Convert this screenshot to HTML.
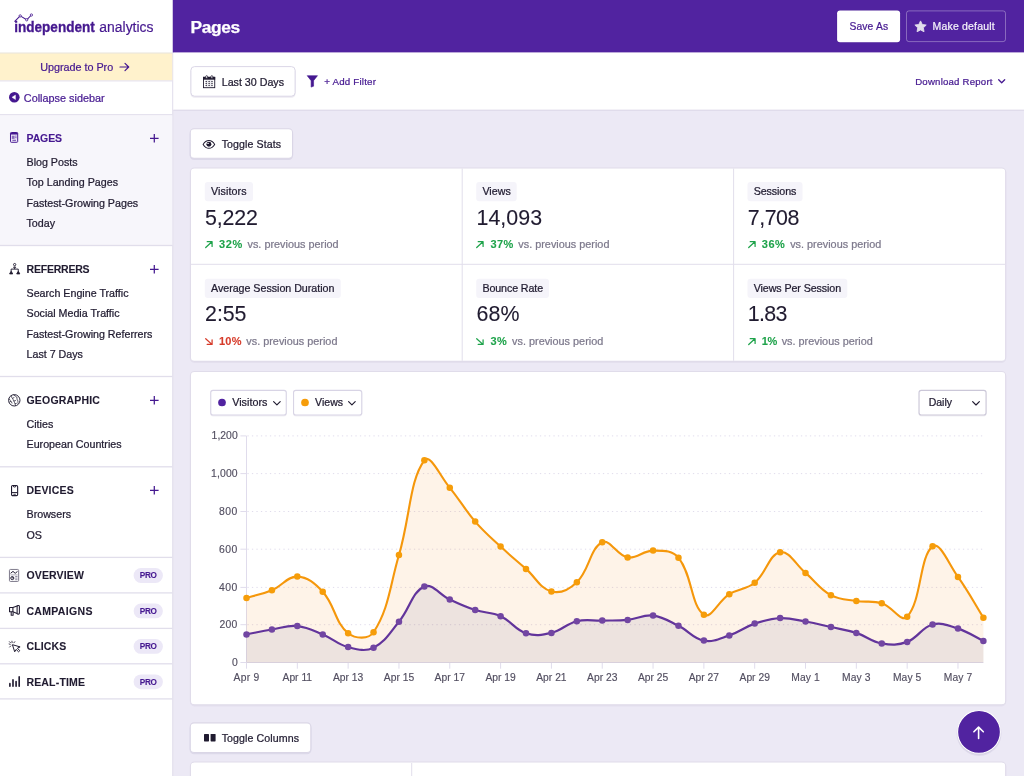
<!DOCTYPE html>
<html lang="en"><head><meta charset="utf-8"><title>Pages - Independent Analytics</title>
<style>
*{box-sizing:border-box;margin:0;padding:0}
html,body{width:1024px;height:776px;overflow:hidden}
body{background:#ECE9F5;font-family:"Liberation Sans",sans-serif;color:#201B30;position:relative}
.t{position:absolute;white-space:nowrap;-webkit-text-stroke:.24px currentColor;margin:0}
svg{position:absolute;overflow:visible}
</style></head><body>
<svg style="left:0;top:0" width="1024" height="776" viewBox="0 0 1024 776">
<rect x="0.00" y="0.00" width="172.30" height="776.00" rx="0" fill="#fff" />
<rect x="172.25" y="52.60" width="1.1" height="723.40" fill="#E2DFEC"/>
<rect x="172.80" y="0.00" width="851.20" height="52.60" rx="0" fill="#5123A0" />
<rect x="173.30" y="52.60" width="850.70" height="57.40" rx="0" fill="#fff" />
<rect x="173.30" y="109.65" width="850.70" height="1.1" fill="#DCD8E8"/>
<rect x="0.00" y="53.10" width="172.30" height="27.40" rx="0" fill="#FFF2CC" />
<rect x="0.00" y="52.50" width="172.30" height="1" fill="#E8E3DA"/>
<rect x="0.00" y="80.35" width="172.30" height="1.1" fill="#E4E0EE"/>
<rect x="0.00" y="114.15" width="172.30" height="1.3" fill="#E1DEEB"/>
<rect x="0.00" y="115.40" width="172.30" height="129.50" rx="0" fill="#F7F6FB" />
<rect x="0.00" y="244.85" width="172.30" height="1.3" fill="#E1DEEB"/>
<rect x="0.00" y="375.85" width="172.30" height="1.3" fill="#E1DEEB"/>
<rect x="0.00" y="466.15" width="172.30" height="1.3" fill="#E1DEEB"/>
<rect x="0.00" y="556.75" width="172.30" height="1.3" fill="#E1DEEB"/>
<rect x="0.00" y="592.25" width="172.30" height="1.3" fill="#E1DEEB"/>
<rect x="0.00" y="627.75" width="172.30" height="1.3" fill="#E1DEEB"/>
<rect x="0.00" y="663.15" width="172.30" height="1.3" fill="#E1DEEB"/>
<rect x="0.00" y="698.25" width="172.30" height="1.3" fill="#E1DEEB"/>
<rect x="133.60" y="568.10" width="29.30" height="14.80" rx="7.4" fill="#ECE8F7" />
<rect x="133.60" y="603.55" width="29.30" height="14.80" rx="7.4" fill="#ECE8F7" />
<rect x="133.60" y="639.00" width="29.30" height="14.80" rx="7.4" fill="#ECE8F7" />
<rect x="133.60" y="674.45" width="29.30" height="14.80" rx="7.4" fill="#ECE8F7" />
<rect x="836.60" y="9.90" width="64.00" height="32.80" rx="3.4" fill="#4A1E96" />
<rect x="837.10" y="10.40" width="63.00" height="31.80" rx="2.9" fill="#fff" />
<rect x="906.50" y="10.90" width="99.00" height="30.70" rx="2.40" fill="none" stroke="rgba(255,255,255,.32)" stroke-width="1" />
<rect x="190.40" y="67.20" width="105.20" height="30.60" rx="4.2" fill="rgba(70,50,120,.10)" />
<rect x="190.90" y="66.60" width="104.20" height="29.60" rx="3.70" fill="#fff" stroke="#DBD7E7" stroke-width="1" />
<rect x="189.70" y="129.40" width="103.40" height="30.60" rx="4.4" fill="rgba(70,50,120,.09)" />
<rect x="190.25" y="128.75" width="102.30" height="29.50" rx="3.85" fill="#fff" stroke="#DAD6E6" stroke-width="1.1" />
<rect x="189.90" y="168.40" width="816.30" height="194.50" rx="4.4" fill="rgba(70,50,120,.05)" />
<rect x="190.45" y="167.95" width="815.20" height="193.40" rx="3.85" fill="#fff" stroke="#E0DCEA" stroke-width="1.1" />
<rect x="191.00" y="263.80" width="814.10" height="1" fill="#E1DEEB"/>
<rect x="461.70" y="168.50" width="1" height="192.30" fill="#E1DEEB"/>
<rect x="733.10" y="168.50" width="1" height="192.30" fill="#E1DEEB"/>
<rect x="204.80" y="182.10" width="48.20" height="19.20" rx="3" fill="#F5F4FA" />
<rect x="476.20" y="182.10" width="40.50" height="19.20" rx="3" fill="#F5F4FA" />
<rect x="747.50" y="182.10" width="55.00" height="19.20" rx="3" fill="#F5F4FA" />
<rect x="204.80" y="278.70" width="136.00" height="19.20" rx="3" fill="#F5F4FA" />
<rect x="476.20" y="278.70" width="72.80" height="19.20" rx="3" fill="#F5F4FA" />
<rect x="747.50" y="278.70" width="99.80" height="19.20" rx="3" fill="#F5F4FA" />
<rect x="189.90" y="372.00" width="816.30" height="334.40" rx="4.4" fill="rgba(70,50,120,.05)" />
<rect x="190.45" y="371.55" width="815.20" height="333.30" rx="3.85" fill="#fff" stroke="#E0DCEA" stroke-width="1.1" />
<rect x="210.20" y="390.80" width="76.60" height="25.70" rx="3" fill="rgba(70,50,120,.07)" />
<rect x="210.75" y="390.35" width="75.50" height="24.60" rx="2.25" fill="#fff" stroke="#D8D4E5" stroke-width="1.1" />
<circle cx="222.0" cy="402.5" r="3.85" fill="#5123A0"/>
<rect x="293.00" y="390.80" width="69.30" height="25.70" rx="3" fill="rgba(70,50,120,.07)" />
<rect x="293.55" y="390.35" width="68.20" height="24.60" rx="2.25" fill="#fff" stroke="#D8D4E5" stroke-width="1.1" />
<circle cx="305.0" cy="402.5" r="3.85" fill="#F69D0A"/>
<rect x="918.50" y="390.80" width="68.10" height="25.70" rx="3" fill="rgba(70,50,120,.07)" />
<rect x="919.05" y="390.35" width="67.00" height="24.60" rx="2.25" fill="#fff" stroke="#CBC7D8" stroke-width="1.1" />
<path d="M240.4 662.50H246.5" stroke="#E0DCEC" stroke-width="1" fill="none"/>
<path d="M247.4 624.70H983" stroke="#E0DCEC" stroke-width="1" stroke-dasharray="1.3 3.2" fill="none"/>
<path d="M240.4 624.70H246.5" stroke="#E0DCEC" stroke-width="1" fill="none"/>
<path d="M247.4 587.40H983" stroke="#E0DCEC" stroke-width="1" stroke-dasharray="1.3 3.2" fill="none"/>
<path d="M240.4 587.40H246.5" stroke="#E0DCEC" stroke-width="1" fill="none"/>
<path d="M247.4 549.20H983" stroke="#E0DCEC" stroke-width="1" stroke-dasharray="1.3 3.2" fill="none"/>
<path d="M240.4 549.20H246.5" stroke="#E0DCEC" stroke-width="1" fill="none"/>
<path d="M247.4 511.50H983" stroke="#E0DCEC" stroke-width="1" stroke-dasharray="1.3 3.2" fill="none"/>
<path d="M240.4 511.50H246.5" stroke="#E0DCEC" stroke-width="1" fill="none"/>
<path d="M247.4 473.60H983" stroke="#E0DCEC" stroke-width="1" stroke-dasharray="1.3 3.2" fill="none"/>
<path d="M240.4 473.60H246.5" stroke="#E0DCEC" stroke-width="1" fill="none"/>
<path d="M247.4 435.90H983" stroke="#E0DCEC" stroke-width="1" stroke-dasharray="1.3 3.2" fill="none"/>
<path d="M240.4 435.90H246.5" stroke="#E0DCEC" stroke-width="1" fill="none"/>
<path d="M246.5 435.9V662.5" stroke="#E0DCEC" stroke-width="1" fill="none"/>
<path d="M246.5 662.5H983.4" stroke="#E0DCEC" stroke-width="1" fill="none"/>
<path d="M246.50 662.5V668.7" stroke="#E0DCEC" stroke-width="1" fill="none"/>
<path d="M297.32 662.5V668.7" stroke="#E0DCEC" stroke-width="1" fill="none"/>
<path d="M348.14 662.5V668.7" stroke="#E0DCEC" stroke-width="1" fill="none"/>
<path d="M398.96 662.5V668.7" stroke="#E0DCEC" stroke-width="1" fill="none"/>
<path d="M449.78 662.5V668.7" stroke="#E0DCEC" stroke-width="1" fill="none"/>
<path d="M500.60 662.5V668.7" stroke="#E0DCEC" stroke-width="1" fill="none"/>
<path d="M551.42 662.5V668.7" stroke="#E0DCEC" stroke-width="1" fill="none"/>
<path d="M602.24 662.5V668.7" stroke="#E0DCEC" stroke-width="1" fill="none"/>
<path d="M653.06 662.5V668.7" stroke="#E0DCEC" stroke-width="1" fill="none"/>
<path d="M703.88 662.5V668.7" stroke="#E0DCEC" stroke-width="1" fill="none"/>
<path d="M754.70 662.5V668.7" stroke="#E0DCEC" stroke-width="1" fill="none"/>
<path d="M805.52 662.5V668.7" stroke="#E0DCEC" stroke-width="1" fill="none"/>
<path d="M856.34 662.5V668.7" stroke="#E0DCEC" stroke-width="1" fill="none"/>
<path d="M907.16 662.5V668.7" stroke="#E0DCEC" stroke-width="1" fill="none"/>
<path d="M957.98 662.5V668.7" stroke="#E0DCEC" stroke-width="1" fill="none"/>
<path d="M246.50,597.90C256.66,594.82 262.16,594.29 271.91,590.20C282.49,585.77 287.29,576.28 297.32,576.60C307.62,576.92 315.03,583.23 322.73,591.80C335.36,605.87 334.80,622.57 348.14,633.20C355.12,638.77 368.71,639.75 373.55,632.30C389.04,608.47 389.74,586.20 398.96,555.00C410.07,517.40 409.66,479.75 424.37,460.30C429.99,452.87 440.23,476.28 449.78,487.80C460.56,500.80 464.16,508.84 475.19,521.60C484.49,532.36 490.17,536.89 500.60,546.60C510.49,555.81 515.88,559.95 526.01,568.90C536.20,577.91 540.10,588.54 551.42,591.50C560.43,593.86 569.43,589.36 576.83,582.20C589.76,569.68 589.73,548.41 602.24,542.30C610.06,538.49 616.89,555.64 627.65,557.40C637.22,558.96 642.91,550.54 653.06,550.60C663.24,550.66 672.43,550.08 678.47,557.70C692.76,575.72 690.53,605.11 703.88,614.70C710.86,619.71 718.32,601.09 729.29,594.20C738.65,588.33 746.33,589.72 754.70,582.80C766.66,572.92 768.97,554.37 780.11,552.20C789.29,550.41 795.51,564.43 805.52,572.90C815.84,581.63 819.45,588.85 830.93,595.20C839.78,600.09 846.07,599.38 856.34,601.00C866.39,602.58 872.21,600.23 881.75,603.20C892.53,606.55 901.51,623.12 907.16,616.80C921.84,600.36 919.29,556.73 932.57,546.30C939.62,540.77 948.78,563.97 957.98,576.90C969.10,592.53 973.23,601.38 983.39,617.70L983.39,662.5L246.50,662.5Z" fill="rgba(246,140,30,.1)"/>
<path d="M246.50,597.90C256.66,594.82 262.16,594.29 271.91,590.20C282.49,585.77 287.29,576.28 297.32,576.60C307.62,576.92 315.03,583.23 322.73,591.80C335.36,605.87 334.80,622.57 348.14,633.20C355.12,638.77 368.71,639.75 373.55,632.30C389.04,608.47 389.74,586.20 398.96,555.00C410.07,517.40 409.66,479.75 424.37,460.30C429.99,452.87 440.23,476.28 449.78,487.80C460.56,500.80 464.16,508.84 475.19,521.60C484.49,532.36 490.17,536.89 500.60,546.60C510.49,555.81 515.88,559.95 526.01,568.90C536.20,577.91 540.10,588.54 551.42,591.50C560.43,593.86 569.43,589.36 576.83,582.20C589.76,569.68 589.73,548.41 602.24,542.30C610.06,538.49 616.89,555.64 627.65,557.40C637.22,558.96 642.91,550.54 653.06,550.60C663.24,550.66 672.43,550.08 678.47,557.70C692.76,575.72 690.53,605.11 703.88,614.70C710.86,619.71 718.32,601.09 729.29,594.20C738.65,588.33 746.33,589.72 754.70,582.80C766.66,572.92 768.97,554.37 780.11,552.20C789.29,550.41 795.51,564.43 805.52,572.90C815.84,581.63 819.45,588.85 830.93,595.20C839.78,600.09 846.07,599.38 856.34,601.00C866.39,602.58 872.21,600.23 881.75,603.20C892.53,606.55 901.51,623.12 907.16,616.80C921.84,600.36 919.29,556.73 932.57,546.30C939.62,540.77 948.78,563.97 957.98,576.90C969.10,592.53 973.23,601.38 983.39,617.70" fill="none" stroke="#F5970B" stroke-width="2.1" stroke-linejoin="round"/>
<circle cx="246.50" cy="597.90" r="3.25" fill="#F69D0A"/>
<circle cx="271.91" cy="590.20" r="3.25" fill="#F69D0A"/>
<circle cx="297.32" cy="576.60" r="3.25" fill="#F69D0A"/>
<circle cx="322.73" cy="591.80" r="3.25" fill="#F69D0A"/>
<circle cx="348.14" cy="633.20" r="3.25" fill="#F69D0A"/>
<circle cx="373.55" cy="632.30" r="3.25" fill="#F69D0A"/>
<circle cx="398.96" cy="555.00" r="3.25" fill="#F69D0A"/>
<circle cx="424.37" cy="460.30" r="3.25" fill="#F69D0A"/>
<circle cx="449.78" cy="487.80" r="3.25" fill="#F69D0A"/>
<circle cx="475.19" cy="521.60" r="3.25" fill="#F69D0A"/>
<circle cx="500.60" cy="546.60" r="3.25" fill="#F69D0A"/>
<circle cx="526.01" cy="568.90" r="3.25" fill="#F69D0A"/>
<circle cx="551.42" cy="591.50" r="3.25" fill="#F69D0A"/>
<circle cx="576.83" cy="582.20" r="3.25" fill="#F69D0A"/>
<circle cx="602.24" cy="542.30" r="3.25" fill="#F69D0A"/>
<circle cx="627.65" cy="557.40" r="3.25" fill="#F69D0A"/>
<circle cx="653.06" cy="550.60" r="3.25" fill="#F69D0A"/>
<circle cx="678.47" cy="557.70" r="3.25" fill="#F69D0A"/>
<circle cx="703.88" cy="614.70" r="3.25" fill="#F69D0A"/>
<circle cx="729.29" cy="594.20" r="3.25" fill="#F69D0A"/>
<circle cx="754.70" cy="582.80" r="3.25" fill="#F69D0A"/>
<circle cx="780.11" cy="552.20" r="3.25" fill="#F69D0A"/>
<circle cx="805.52" cy="572.90" r="3.25" fill="#F69D0A"/>
<circle cx="830.93" cy="595.20" r="3.25" fill="#F69D0A"/>
<circle cx="856.34" cy="601.00" r="3.25" fill="#F69D0A"/>
<circle cx="881.75" cy="603.20" r="3.25" fill="#F69D0A"/>
<circle cx="907.16" cy="616.80" r="3.25" fill="#F69D0A"/>
<circle cx="932.57" cy="546.30" r="3.25" fill="#F69D0A"/>
<circle cx="957.98" cy="576.90" r="3.25" fill="#F69D0A"/>
<circle cx="983.39" cy="617.70" r="3.25" fill="#F69D0A"/>
<path d="M246.50,634.40C256.66,632.44 261.70,631.17 271.91,629.50C282.03,627.85 287.37,625.14 297.32,626.10C307.70,627.10 312.87,630.33 322.73,634.40C333.20,638.73 337.41,644.29 348.14,647.10C357.74,649.61 365.18,651.87 373.55,647.70C385.50,641.75 389.71,632.93 398.96,621.80C410.04,608.45 412.10,591.89 424.37,586.50C432.42,582.97 439.43,594.71 449.78,599.50C459.75,604.11 464.77,606.58 475.19,610.00C485.10,613.26 491.23,611.92 500.60,616.20C511.56,621.20 514.91,629.55 526.01,633.20C535.24,636.23 541.74,635.18 551.42,632.90C562.07,630.38 566.18,623.78 576.83,621.20C586.51,618.86 592.08,620.86 602.24,620.60C612.40,620.34 617.56,620.89 627.65,619.90C637.88,618.89 643.20,614.46 653.06,615.60C663.53,616.82 668.67,620.98 678.47,625.80C689.00,630.98 693.08,638.56 703.88,640.60C713.41,642.40 719.52,638.67 729.29,635.40C739.85,631.87 744.16,627.19 754.70,623.60C764.48,620.27 769.87,618.52 780.11,618.10C790.20,617.68 795.43,619.73 805.52,621.50C815.76,623.29 820.78,624.72 830.93,627.00C841.11,629.28 846.44,629.71 856.34,632.90C866.77,636.27 871.19,641.53 881.75,643.40C891.52,645.13 897.96,645.32 907.16,641.90C918.29,637.76 921.50,627.40 932.57,624.50C941.82,622.08 948.29,625.47 957.98,628.60C968.61,632.03 973.23,635.98 983.39,640.90L983.39,662.5L246.50,662.5Z" fill="rgba(93,88,147,.1)"/>
<path d="M246.50,634.40C256.66,632.44 261.70,631.17 271.91,629.50C282.03,627.85 287.37,625.14 297.32,626.10C307.70,627.10 312.87,630.33 322.73,634.40C333.20,638.73 337.41,644.29 348.14,647.10C357.74,649.61 365.18,651.87 373.55,647.70C385.50,641.75 389.71,632.93 398.96,621.80C410.04,608.45 412.10,591.89 424.37,586.50C432.42,582.97 439.43,594.71 449.78,599.50C459.75,604.11 464.77,606.58 475.19,610.00C485.10,613.26 491.23,611.92 500.60,616.20C511.56,621.20 514.91,629.55 526.01,633.20C535.24,636.23 541.74,635.18 551.42,632.90C562.07,630.38 566.18,623.78 576.83,621.20C586.51,618.86 592.08,620.86 602.24,620.60C612.40,620.34 617.56,620.89 627.65,619.90C637.88,618.89 643.20,614.46 653.06,615.60C663.53,616.82 668.67,620.98 678.47,625.80C689.00,630.98 693.08,638.56 703.88,640.60C713.41,642.40 719.52,638.67 729.29,635.40C739.85,631.87 744.16,627.19 754.70,623.60C764.48,620.27 769.87,618.52 780.11,618.10C790.20,617.68 795.43,619.73 805.52,621.50C815.76,623.29 820.78,624.72 830.93,627.00C841.11,629.28 846.44,629.71 856.34,632.90C866.77,636.27 871.19,641.53 881.75,643.40C891.52,645.13 897.96,645.32 907.16,641.90C918.29,637.76 921.50,627.40 932.57,624.50C941.82,622.08 948.29,625.47 957.98,628.60C968.61,632.03 973.23,635.98 983.39,640.90" fill="none" stroke="#62349B" stroke-width="2.2" stroke-linejoin="round"/>
<circle cx="246.50" cy="634.40" r="3.25" fill="#7246A2"/>
<circle cx="271.91" cy="629.50" r="3.25" fill="#7246A2"/>
<circle cx="297.32" cy="626.10" r="3.25" fill="#7246A2"/>
<circle cx="322.73" cy="634.40" r="3.25" fill="#7246A2"/>
<circle cx="348.14" cy="647.10" r="3.25" fill="#7246A2"/>
<circle cx="373.55" cy="647.70" r="3.25" fill="#7246A2"/>
<circle cx="398.96" cy="621.80" r="3.25" fill="#7246A2"/>
<circle cx="424.37" cy="586.50" r="3.25" fill="#7246A2"/>
<circle cx="449.78" cy="599.50" r="3.25" fill="#7246A2"/>
<circle cx="475.19" cy="610.00" r="3.25" fill="#7246A2"/>
<circle cx="500.60" cy="616.20" r="3.25" fill="#7246A2"/>
<circle cx="526.01" cy="633.20" r="3.25" fill="#7246A2"/>
<circle cx="551.42" cy="632.90" r="3.25" fill="#7246A2"/>
<circle cx="576.83" cy="621.20" r="3.25" fill="#7246A2"/>
<circle cx="602.24" cy="620.60" r="3.25" fill="#7246A2"/>
<circle cx="627.65" cy="619.90" r="3.25" fill="#7246A2"/>
<circle cx="653.06" cy="615.60" r="3.25" fill="#7246A2"/>
<circle cx="678.47" cy="625.80" r="3.25" fill="#7246A2"/>
<circle cx="703.88" cy="640.60" r="3.25" fill="#7246A2"/>
<circle cx="729.29" cy="635.40" r="3.25" fill="#7246A2"/>
<circle cx="754.70" cy="623.60" r="3.25" fill="#7246A2"/>
<circle cx="780.11" cy="618.10" r="3.25" fill="#7246A2"/>
<circle cx="805.52" cy="621.50" r="3.25" fill="#7246A2"/>
<circle cx="830.93" cy="627.00" r="3.25" fill="#7246A2"/>
<circle cx="856.34" cy="632.90" r="3.25" fill="#7246A2"/>
<circle cx="881.75" cy="643.40" r="3.25" fill="#7246A2"/>
<circle cx="907.16" cy="641.90" r="3.25" fill="#7246A2"/>
<circle cx="932.57" cy="624.50" r="3.25" fill="#7246A2"/>
<circle cx="957.98" cy="628.60" r="3.25" fill="#7246A2"/>
<circle cx="983.39" cy="640.90" r="3.25" fill="#7246A2"/>
<rect x="189.70" y="723.50" width="121.70" height="30.80" rx="4.4" fill="rgba(70,50,120,.09)" />
<rect x="190.25" y="722.85" width="120.60" height="29.70" rx="3.85" fill="#fff" stroke="#DAD6E6" stroke-width="1.1" />
<rect x="189.90" y="762.40" width="816.30" height="39.70" rx="4.4" fill="rgba(70,50,120,.05)" />
<rect x="190.45" y="761.95" width="815.20" height="38.60" rx="3.85" fill="#fff" stroke="#E0DCEA" stroke-width="1.1" />
<rect x="411.20" y="763.00" width="1" height="13.00" fill="#E1DEEB"/>
<circle cx="979" cy="733.4" r="22.5" fill="rgba(60,40,110,.07)"/>
<circle cx="979" cy="732.6" r="22" fill="rgba(60,40,110,.07)"/>
<circle cx="979" cy="731.9" r="21.4" fill="#5123A0" stroke="#fff" stroke-width="1.1"/>
</svg>
<div id="fg" style="position:absolute;left:0;top:0;width:1024px;height:776px;will-change:transform">
<svg class="i" style="left:0;top:0" width="172" height="52" viewBox="0 0 172 52"><text x="14.2" y="31.6" font-family="Liberation Sans, sans-serif" font-weight="700" font-size="15.5" fill="#45188F" stroke="#45188F" stroke-width=".35" textLength="80.6" lengthAdjust="spacingAndGlyphs">independent</text><text x="99.3" y="31.6" font-family="Liberation Sans, sans-serif" font-weight="400" font-size="15.5" fill="#45188F" stroke="#45188F" stroke-width=".2" textLength="54.2" lengthAdjust="spacingAndGlyphs">analytics</text><path d="M14.5 21.6 L20.2 15.9 L26.7 19.8 L31.4 15" fill="none" stroke="#45188F" stroke-width="1.05" stroke-linejoin="round"/><circle cx="20.2" cy="15.9" r="1.15" fill="#fff" stroke="#45188F" stroke-width="0.8"/><circle cx="26.7" cy="19.8" r="1.15" fill="#fff" stroke="#45188F" stroke-width="0.8"/><circle cx="31.4" cy="15" r="1.15" fill="#fff" stroke="#45188F" stroke-width="0.8"/></svg>
<div class="t" style="left:40.20px;top:59.96px;font-size:10.8px;line-height:14px;color:#451890;font-weight:400;-webkit-text-stroke:.22px;letter-spacing:-0.017px;">Upgrade to Pro</div>
<svg class="i" style="left:119.00px;top:62.00px" width="11" height="10" viewBox="0 0 11 10"><path d="M1 5H9.6M6 1.3L9.7 5L6 8.7" fill="none" stroke="#451890" stroke-width="1.2" stroke-linecap="round" stroke-linejoin="round"/></svg>
<svg class="i" style="left:9.00px;top:92.40px" width="10.6" height="10.6" viewBox="0 0 20 20"><circle cx="10" cy="10" r="10" fill="#451890"/><path d="M12.2 5.8V14.2L5.6 10Z" fill="#fff" stroke="#fff" stroke-width=".8" stroke-linejoin="round"/></svg>
<div class="t" style="left:23.80px;top:90.84px;font-size:10.85px;line-height:14px;color:#451890;font-weight:400;-webkit-text-stroke:.22px;letter-spacing:0.005px;">Collapse sidebar</div>
<div class="t" style="left:26.50px;top:130.76px;font-size:10.5px;line-height:14px;color:#451890;font-weight:700;-webkit-text-stroke:.1px;letter-spacing:-0.096px;">PAGES</div>
<svg class="i" style="left:150.00px;top:133.90px" width="8.6" height="8.6" viewBox="0 0 8.6 8.6"><path d="M4.3 0V8.6M0 4.3H8.6" stroke="#451890" stroke-width="1.25" fill="none"/></svg>
<div class="t" style="left:26.50px;top:155.09px;font-size:10.7px;line-height:14px;color:#201B30;font-weight:400;">Blog Posts</div>
<div class="t" style="left:26.50px;top:175.34px;font-size:10.7px;line-height:14px;color:#201B30;font-weight:400;">Top Landing Pages</div>
<div class="t" style="left:26.50px;top:195.59px;font-size:10.7px;line-height:14px;color:#201B30;font-weight:400;">Fastest-Growing Pages</div>
<div class="t" style="left:26.50px;top:215.84px;font-size:10.7px;line-height:14px;color:#201B30;font-weight:400;">Today</div>
<div class="t" style="left:26.50px;top:261.76px;font-size:10.5px;line-height:14px;color:#201B30;font-weight:700;-webkit-text-stroke:.1px;letter-spacing:-0.207px;">REFERRERS</div>
<svg class="i" style="left:150.00px;top:264.90px" width="8.6" height="8.6" viewBox="0 0 8.6 8.6"><path d="M4.3 0V8.6M0 4.3H8.6" stroke="#451890" stroke-width="1.25" fill="none"/></svg>
<div class="t" style="left:26.50px;top:286.09px;font-size:10.7px;line-height:14px;color:#201B30;font-weight:400;">Search Engine Traffic</div>
<div class="t" style="left:26.50px;top:306.34px;font-size:10.7px;line-height:14px;color:#201B30;font-weight:400;">Social Media Traffic</div>
<div class="t" style="left:26.50px;top:326.59px;font-size:10.7px;line-height:14px;color:#201B30;font-weight:400;">Fastest-Growing Referrers</div>
<div class="t" style="left:26.50px;top:346.84px;font-size:10.7px;line-height:14px;color:#201B30;font-weight:400;">Last 7 Days</div>
<div class="t" style="left:26.50px;top:392.76px;font-size:10.5px;line-height:14px;color:#201B30;font-weight:700;-webkit-text-stroke:.1px;letter-spacing:0.184px;">GEOGRAPHIC</div>
<svg class="i" style="left:150.00px;top:395.90px" width="8.6" height="8.6" viewBox="0 0 8.6 8.6"><path d="M4.3 0V8.6M0 4.3H8.6" stroke="#451890" stroke-width="1.25" fill="none"/></svg>
<div class="t" style="left:26.50px;top:417.09px;font-size:10.7px;line-height:14px;color:#201B30;font-weight:400;">Cities</div>
<div class="t" style="left:26.50px;top:437.34px;font-size:10.7px;line-height:14px;color:#201B30;font-weight:400;">European Countries</div>
<div class="t" style="left:26.50px;top:482.96px;font-size:10.5px;line-height:14px;color:#201B30;font-weight:700;-webkit-text-stroke:.1px;letter-spacing:0.172px;">DEVICES</div>
<svg class="i" style="left:150.00px;top:486.10px" width="8.6" height="8.6" viewBox="0 0 8.6 8.6"><path d="M4.3 0V8.6M0 4.3H8.6" stroke="#451890" stroke-width="1.25" fill="none"/></svg>
<div class="t" style="left:26.50px;top:507.29px;font-size:10.7px;line-height:14px;color:#201B30;font-weight:400;">Browsers</div>
<div class="t" style="left:26.50px;top:527.54px;font-size:10.7px;line-height:14px;color:#201B30;font-weight:400;">OS</div>
<div class="t" style="left:26.40px;top:568.26px;font-size:10.5px;line-height:14px;color:#201B30;font-weight:700;-webkit-text-stroke:.1px;letter-spacing:0.162px;">OVERVIEW</div>
<div class="t" style="left:139.80px;top:570.16px;font-size:8.2px;line-height:11px;color:#451890;font-weight:700;-webkit-text-stroke:.1px;letter-spacing:-0.290px;">PRO</div>
<div class="t" style="left:26.40px;top:603.71px;font-size:10.5px;line-height:14px;color:#201B30;font-weight:700;-webkit-text-stroke:.1px;letter-spacing:0.334px;">CAMPAIGNS</div>
<div class="t" style="left:139.80px;top:605.61px;font-size:8.2px;line-height:11px;color:#451890;font-weight:700;-webkit-text-stroke:.1px;letter-spacing:-0.290px;">PRO</div>
<div class="t" style="left:26.40px;top:639.16px;font-size:10.5px;line-height:14px;color:#201B30;font-weight:700;-webkit-text-stroke:.1px;letter-spacing:0.153px;">CLICKS</div>
<div class="t" style="left:139.80px;top:641.06px;font-size:8.2px;line-height:11px;color:#451890;font-weight:700;-webkit-text-stroke:.1px;letter-spacing:-0.290px;">PRO</div>
<div class="t" style="left:26.40px;top:674.61px;font-size:10.5px;line-height:14px;color:#201B30;font-weight:700;-webkit-text-stroke:.1px;letter-spacing:0.182px;">REAL-TIME</div>
<div class="t" style="left:139.80px;top:676.51px;font-size:8.2px;line-height:11px;color:#451890;font-weight:700;-webkit-text-stroke:.1px;letter-spacing:-0.290px;">PRO</div>
<svg class="i" style="left:10.00px;top:132.00px" width="8.2" height="10.8" viewBox="0 0 8.2 10.8"><rect x=".5" y=".5" width="7.2" height="9.8" rx=".8" fill="#EFEAF9" stroke="#451890" stroke-width="1"/><path d="M.5 1.7H7.7" stroke="#451890" stroke-width="1.7"/><rect x="1.8" y="3.7" width="2.8" height="3.2" fill="#451890" opacity=".6"/><path d="M5.3 4.1H6.5M5.3 5.7H6.5M2.4 8.3H6" stroke="#451890" stroke-width=".8"/></svg>
<svg class="i" style="left:8.60px;top:263.00px" width="11.5" height="11.5" viewBox="0 0 11.5 11.5"><circle cx="5.65" cy="1.6" r="1.15" fill="#fff" stroke="#201B30" stroke-width=".9"/><path d="M4.1 4.8C4.1 3 7.2 3 7.2 4.8Z" fill="#201B30"/><path d="M5.65 4.6V6.1M2.15 8V6.1H9.25V8" fill="none" stroke="#201B30" stroke-width=".95"/><path d="M2.15 8.1L3.7 10.9H.6Z M9.25 8.1L10.8 10.9H7.7Z" fill="#201B30" stroke="#201B30" stroke-width=".9" stroke-linejoin="round"/></svg>
<svg class="i" style="left:8.00px;top:393.60px" width="12.6" height="12.6" viewBox="0 0 12.6 12.6"><circle cx="6.3" cy="6.3" r="5.7" fill="none" stroke="#201B30" stroke-width=".95"/><path d="M3 1.7C4 2.6 3.4 3.6 4.4 4.4C5.4 5.2 5 6.2 5.8 7C6.6 7.8 6.4 9 7 9.8C7.4 10.4 7.2 11.2 7.4 11.8M5.6 .8C6.2 2 8 1.8 8.7 3C9.3 4.2 8.6 5 9.4 6C10.2 7 9.9 8.4 10 9.6M.8 4.8C2 5.2 1.8 6.4 2.8 7C3.6 7.5 3.4 8.6 4.1 9.4M4.4 4.4L6.3 3.5M5.8 7L7.9 6.5M7 9.8L8.7 9.3M2.8 7L1.4 8.6" fill="none" stroke="#201B30" stroke-width=".85" opacity=".9"/></svg>
<svg class="i" style="left:10.80px;top:484.80px" width="7.2" height="11.2" viewBox="0 0 7.2 11.2"><rect x=".55" y=".55" width="6.1" height="10.1" rx="1.2" fill="none" stroke="#201B30" stroke-width="1.1"/><path d="M2.1 .6L2.8 2H4.4L5.1 .6" fill="none" stroke="#201B30" stroke-width=".9"/><path d="M.6 7.6H6.6" stroke="#201B30" stroke-width="1"/><path d="M2.4 9.3H4.8" stroke="#201B30" stroke-width=".8"/></svg>
<svg class="i" style="left:9.00px;top:569.00px" width="10.1" height="12.9" viewBox="0 0 10.1 12.9"><rect x=".45" y=".45" width="9.2" height="12" rx="1" fill="none" stroke="#6F6B7E" stroke-width=".9"/><path d="M1.6 4.3L4 2.4L6.2 4.3L8.5 2.4" fill="none" stroke="#201B30" stroke-width="1" stroke-linejoin="round"/><path d="M1.5 5.9H8.6" stroke="#8E8A9A" stroke-width=".7"/><circle cx="3.3" cy="9.1" r="1.55" fill="none" stroke="#201B30" stroke-width=".95"/><path d="M3.3 7.6V9.1H4.8" fill="none" stroke="#201B30" stroke-width=".7"/><path d="M6.2 7.5H8.5M6.2 9.1H8.5M6.2 10.7H8.5" stroke="#77738A" stroke-width=".8"/></svg>
<svg class="i" style="left:9.00px;top:605.10px" width="11" height="11" viewBox="0 0 11 11"><path d="M.55 2.5H3.9V6.7H.55Z" fill="none" stroke="#201B30" stroke-width="1.1" stroke-linejoin="round"/><path d="M3.9 2.5L8.1 1.1M3.9 6.7L8.1 8.4" fill="none" stroke="#201B30" stroke-width="1.1"/><rect x="8.1" y=".5" width="2.3" height="8.6" rx=".9" fill="none" stroke="#201B30" stroke-width="1.05"/><path d="M2.2 6.8V10.3H4.1V7.2" fill="none" stroke="#201B30" stroke-width="1.05" stroke-linejoin="round"/></svg>
<svg class="i" style="left:8.60px;top:639.60px" width="11.8" height="12.4" viewBox="0 0 11.8 12.4"><path d="M3.4 4.7L11.1 6.9L8.4 8.2L10.8 10.7L9.6 11.8L7.1 9.4L5.7 11.8Z" fill="#fff" stroke="#201B30" stroke-width="1" stroke-linejoin="round"/><path d="M.45 1.7L1.6 2.85M2.95 1.2L3.1 2.6M5.8 1.7L4.9 2.8M.1 4L1.2 4.35M.65 7.05L1.75 5.95" stroke="#201B30" stroke-width=".85" fill="none" stroke-linecap="round"/></svg>
<svg class="i" style="left:8.80px;top:676.00px" width="11.2" height="11" viewBox="0 0 11.2 11"><path d="M.9 10.2V7.7M4 10.2V3.9M7.1 10.2V5.6M10.2 10.2V.9" stroke="#201B30" stroke-width="1.65" stroke-linecap="round" fill="none"/></svg>
<h1 class="t" style="left:190.50px;top:15.77px;font-size:17.4px;line-height:23px;color:#fff;font-weight:700;-webkit-text-stroke:.25px;letter-spacing:-0.413px;">Pages</h1>
<div class="t" style="left:849.40px;top:19.93px;font-size:10.3px;line-height:13px;color:#451890;font-weight:400;-webkit-text-stroke:.22px;letter-spacing:0.159px;">Save As</div>
<svg class="i" style="left:913.80px;top:19.90px" width="13.1" height="12.6" viewBox="0 0 24 23"><path d="M12 1.6l3.2 6.6 7.2 1-5.2 5.1 1.2 7.2-6.4-3.4-6.4 3.4 1.2-7.2L1.6 9.2l7.2-1z" fill="#E2DDEC" stroke="#E2DDEC" stroke-width="1.6" stroke-linejoin="round"/></svg>
<div class="t" style="left:932.60px;top:19.06px;font-size:10.5px;line-height:14px;color:#F4F1FA;font-weight:400;-webkit-text-stroke:.22px;letter-spacing:0.173px;">Make default</div>
<svg class="i" style="left:203.00px;top:75.00px" width="12.2" height="13.2" viewBox="0 0 12.2 13.2"><rect x=".45" y="2.3" width="11.3" height="10.4" fill="#fff" stroke="#201B30" stroke-width=".9"/><rect x="0" y="1.9" width="12.2" height="2.8" fill="#201B30"/><rect x="2.7" y=".7" width="1.9" height="2.6" rx=".9" fill="#fff" stroke="#201B30" stroke-width=".8"/><rect x="7.9" y=".7" width="1.9" height="2.6" rx=".9" fill="#fff" stroke="#201B30" stroke-width=".8"/><g fill="#201B30"><circle cx="3.2" cy="6.5" r=".7"/><circle cx="6.1" cy="6.5" r=".7"/><circle cx="9" cy="6.5" r=".7"/><circle cx="3.2" cy="8.55" r=".7"/><circle cx="6.1" cy="8.55" r=".7"/><circle cx="9" cy="8.55" r=".7"/><circle cx="3.2" cy="10.5" r=".7"/><circle cx="6.1" cy="10.5" r=".7"/><circle cx="9" cy="10.5" r=".7"/></g><path d="M4.65 5V12M7.6 5V12" stroke="#D9D7E0" stroke-width=".5"/></svg>
<div class="t" style="left:221.70px;top:74.59px;font-size:10.7px;line-height:14px;color:#201B30;font-weight:400;letter-spacing:-0.004px;">Last 30 Days</div>
<svg class="i" style="left:306.90px;top:75.30px" width="10.7" height="12.6" viewBox="0 0 11.2 12.6"><path d="M.2 .4H11L6.9 5.6V11.4L4.3 12.4V5.6Z" fill="#451890" stroke="#451890" stroke-width=".6" stroke-linejoin="round"/></svg>
<div class="t" style="left:324.30px;top:75.32px;font-size:9.75px;line-height:13px;color:#451890;font-weight:400;-webkit-text-stroke:.22px;letter-spacing:0.184px;">+ Add Filter</div>
<div class="t" style="left:915.20px;top:75.11px;font-size:9.65px;line-height:13px;color:#451890;font-weight:400;-webkit-text-stroke:.22px;letter-spacing:0.209px;">Download Report</div>
<svg class="i" style="left:997.80px;top:79.40px" width="7.4" height="4.6" viewBox="0 0 7.4 4.6"><path d="M.7 .7L3.7 3.7L6.7 .7" fill="none" stroke="#451890" stroke-width="1.3" stroke-linecap="round" stroke-linejoin="round"/></svg>
<svg class="i" style="left:202.40px;top:139.70px" width="13.8" height="8.8" viewBox="0 0 13.8 9.6"><path d="M.6 4.8C2.4 1.8 4.6 .6 6.9 .6S11.4 1.8 13.2 4.8C11.4 7.8 9.2 9 6.9 9S2.4 7.8 .6 4.8Z" fill="none" stroke="#201B30" stroke-width="1.1"/><circle cx="6.9" cy="4.6" r="2.7" fill="#201B30"/><circle cx="6" cy="3.7" r=".8" fill="#fff"/></svg>
<div class="t" style="left:221.70px;top:137.23px;font-size:10.6px;line-height:14px;color:#201B30;font-weight:400;letter-spacing:0.089px;">Toggle Stats</div>
<div class="t" style="left:211.00px;top:184.39px;font-size:10.7px;line-height:14px;color:#201B30;font-weight:400;letter-spacing:0.102px;">Visitors</div>
<div class="t" style="left:205.10px;top:203.83px;font-size:21.4px;line-height:28px;color:#201B30;font-weight:400;-webkit-text-stroke:.1px;letter-spacing:-0.170px;">5,222</div>
<svg class="i" style="left:205.00px;top:241.10px" width="7.8" height="7.2" viewBox="0 0 7.8 7.2"><path d="M.7 6.5L6.9 .8M2.2 .7H7.1V5.4" fill="none" stroke="#1FA34B" stroke-width="1.25" stroke-linecap="round" stroke-linejoin="round"/></svg>
<div class="t" style="left:219.00px;top:237.19px;font-size:11px;line-height:14px;color:#1FA34B;font-weight:700;-webkit-text-stroke:.1px;letter-spacing:0.595px;">32%</div>
<div class="t" style="left:247.50px;top:237.24px;font-size:10.85px;line-height:14px;color:#7D798C;font-weight:400;letter-spacing:0.007px;">vs. previous period</div>
<div class="t" style="left:482.40px;top:184.39px;font-size:10.7px;line-height:14px;color:#201B30;font-weight:400;letter-spacing:0.030px;">Views</div>
<div class="t" style="left:476.50px;top:203.83px;font-size:21.4px;line-height:28px;color:#201B30;font-weight:400;-webkit-text-stroke:.1px;letter-spacing:0.024px;">14,093</div>
<svg class="i" style="left:476.40px;top:241.10px" width="7.8" height="7.2" viewBox="0 0 7.8 7.2"><path d="M.7 6.5L6.9 .8M2.2 .7H7.1V5.4" fill="none" stroke="#1FA34B" stroke-width="1.25" stroke-linecap="round" stroke-linejoin="round"/></svg>
<div class="t" style="left:490.40px;top:237.19px;font-size:11px;line-height:14px;color:#1FA34B;font-weight:700;-webkit-text-stroke:.1px;letter-spacing:0.395px;">37%</div>
<div class="t" style="left:518.30px;top:237.24px;font-size:10.85px;line-height:14px;color:#7D798C;font-weight:400;letter-spacing:0.007px;">vs. previous period</div>
<div class="t" style="left:753.70px;top:184.39px;font-size:10.7px;line-height:14px;color:#201B30;font-weight:400;letter-spacing:-0.102px;">Sessions</div>
<div class="t" style="left:747.80px;top:203.83px;font-size:21.4px;line-height:28px;color:#201B30;font-weight:400;-webkit-text-stroke:.1px;letter-spacing:-0.490px;">7,708</div>
<svg class="i" style="left:747.70px;top:241.10px" width="7.8" height="7.2" viewBox="0 0 7.8 7.2"><path d="M.7 6.5L6.9 .8M2.2 .7H7.1V5.4" fill="none" stroke="#1FA34B" stroke-width="1.25" stroke-linecap="round" stroke-linejoin="round"/></svg>
<div class="t" style="left:761.70px;top:237.19px;font-size:11px;line-height:14px;color:#1FA34B;font-weight:700;-webkit-text-stroke:.1px;letter-spacing:0.595px;">36%</div>
<div class="t" style="left:790.20px;top:237.24px;font-size:10.85px;line-height:14px;color:#7D798C;font-weight:400;letter-spacing:0.007px;">vs. previous period</div>
<div class="t" style="left:211.00px;top:280.99px;font-size:10.7px;line-height:14px;color:#201B30;font-weight:400;letter-spacing:-0.026px;">Average Session Duration</div>
<div class="t" style="left:205.10px;top:300.43px;font-size:21.4px;line-height:28px;color:#201B30;font-weight:400;-webkit-text-stroke:.1px;letter-spacing:-0.088px;">2:55</div>
<svg class="i" style="left:205.00px;top:337.70px" width="7.8" height="7.2" viewBox="0 0 7.8 7.2"><path d="M.7 .7L6.9 6.4M2.2 6.5H7.1V1.8" fill="none" stroke="#D63B2A" stroke-width="1.25" stroke-linecap="round" stroke-linejoin="round"/></svg>
<div class="t" style="left:219.00px;top:333.79px;font-size:11px;line-height:14px;color:#D63B2A;font-weight:700;-webkit-text-stroke:.1px;letter-spacing:0.195px;">10%</div>
<div class="t" style="left:246.30px;top:333.84px;font-size:10.85px;line-height:14px;color:#7D798C;font-weight:400;letter-spacing:0.007px;">vs. previous period</div>
<div class="t" style="left:482.40px;top:280.99px;font-size:10.7px;line-height:14px;color:#201B30;font-weight:400;letter-spacing:-0.106px;">Bounce Rate</div>
<div class="t" style="left:476.50px;top:300.43px;font-size:21.4px;line-height:28px;color:#201B30;font-weight:400;-webkit-text-stroke:.1px;letter-spacing:0.123px;">68%</div>
<svg class="i" style="left:476.40px;top:337.70px" width="7.8" height="7.2" viewBox="0 0 7.8 7.2"><path d="M.7 .7L6.9 6.4M2.2 6.5H7.1V1.8" fill="none" stroke="#1FA34B" stroke-width="1.25" stroke-linecap="round" stroke-linejoin="round"/></svg>
<div class="t" style="left:490.40px;top:333.79px;font-size:11px;line-height:14px;color:#1FA34B;font-weight:700;-webkit-text-stroke:.1px;letter-spacing:0.551px;">3%</div>
<div class="t" style="left:512.10px;top:333.84px;font-size:10.85px;line-height:14px;color:#7D798C;font-weight:400;letter-spacing:0.007px;">vs. previous period</div>
<div class="t" style="left:753.70px;top:280.99px;font-size:10.7px;line-height:14px;color:#201B30;font-weight:400;letter-spacing:-0.089px;">Views Per Session</div>
<div class="t" style="left:747.80px;top:300.43px;font-size:21.4px;line-height:28px;color:#201B30;font-weight:400;-webkit-text-stroke:.1px;letter-spacing:-0.638px;">1.83</div>
<svg class="i" style="left:747.70px;top:337.70px" width="7.8" height="7.2" viewBox="0 0 7.8 7.2"><path d="M.7 6.5L6.9 .8M2.2 .7H7.1V5.4" fill="none" stroke="#1FA34B" stroke-width="1.25" stroke-linecap="round" stroke-linejoin="round"/></svg>
<div class="t" style="left:761.70px;top:333.79px;font-size:11px;line-height:14px;color:#1FA34B;font-weight:700;-webkit-text-stroke:.1px;letter-spacing:-0.299px;">1%</div>
<div class="t" style="left:781.70px;top:333.84px;font-size:10.85px;line-height:14px;color:#7D798C;font-weight:400;letter-spacing:0.007px;">vs. previous period</div>
<div class="t" style="left:232.20px;top:395.18px;font-size:10.75px;line-height:14px;color:#201B30;font-weight:400;letter-spacing:0.019px;">Visitors</div>
<svg class="i" style="left:272.50px;top:401.00px" width="7.8" height="4.6" viewBox="0 0 7.8 4.6"><path d="M.6 .6L3.9 3.9L7.2 .6" fill="none" stroke="#201B30" stroke-width="1.15" stroke-linecap="round" stroke-linejoin="round"/></svg>
<div class="t" style="left:315.10px;top:395.24px;font-size:10.55px;line-height:14px;color:#201B30;font-weight:400;letter-spacing:0.010px;">Views</div>
<svg class="i" style="left:348.00px;top:401.00px" width="7.8" height="4.6" viewBox="0 0 7.8 4.6"><path d="M.6 .6L3.9 3.9L7.2 .6" fill="none" stroke="#201B30" stroke-width="1.15" stroke-linecap="round" stroke-linejoin="round"/></svg>
<div class="t" style="left:928.70px;top:395.36px;font-size:10.5px;line-height:14px;color:#201B30;font-weight:400;letter-spacing:-0.008px;">Daily</div>
<svg class="i" style="left:972.00px;top:401.00px" width="8" height="4.7" viewBox="0 0 7.8 4.6"><path d="M.6 .6L3.9 3.9L7.2 .6" fill="none" stroke="#201B30" stroke-width="1.15" stroke-linecap="round" stroke-linejoin="round"/></svg>
<div class="t" style="left:231.90px;top:656.85px;font-size:10.4px;line-height:12px;color:#524E60;font-weight:400;-webkit-text-stroke:.15px;letter-spacing:0.016px;">0</div>
<div class="t" style="left:219.50px;top:619.05px;font-size:10.4px;line-height:12px;color:#524E60;font-weight:400;-webkit-text-stroke:.15px;letter-spacing:0.283px;">200</div>
<div class="t" style="left:218.90px;top:581.75px;font-size:10.4px;line-height:12px;color:#524E60;font-weight:400;-webkit-text-stroke:.15px;letter-spacing:0.483px;">400</div>
<div class="t" style="left:218.90px;top:543.55px;font-size:10.4px;line-height:12px;color:#524E60;font-weight:400;-webkit-text-stroke:.15px;letter-spacing:0.483px;">600</div>
<div class="t" style="left:218.90px;top:505.85px;font-size:10.4px;line-height:12px;color:#524E60;font-weight:400;-webkit-text-stroke:.15px;letter-spacing:0.483px;">800</div>
<div class="t" style="left:211.10px;top:467.95px;font-size:10.4px;line-height:12px;color:#524E60;font-weight:400;-webkit-text-stroke:.15px;letter-spacing:0.115px;">1,000</div>
<div class="t" style="left:211.60px;top:430.25px;font-size:10.4px;line-height:12px;color:#524E60;font-weight:400;-webkit-text-stroke:.15px;letter-spacing:0.015px;">1,200</div>
<div class="t" style="left:233.51px;top:671.63px;font-size:10.3px;line-height:12px;color:#524E60;font-weight:400;-webkit-text-stroke:.15px;letter-spacing:0.271px;">Apr 9</div>
<div class="t" style="left:282.53px;top:671.63px;font-size:10.3px;line-height:12px;color:#524E60;font-weight:400;-webkit-text-stroke:.15px;letter-spacing:0.000px;">Apr 11</div>
<div class="t" style="left:332.97px;top:671.63px;font-size:10.3px;line-height:12px;color:#524E60;font-weight:400;-webkit-text-stroke:.15px;letter-spacing:0.000px;">Apr 13</div>
<div class="t" style="left:383.79px;top:671.63px;font-size:10.3px;line-height:12px;color:#524E60;font-weight:400;-webkit-text-stroke:.15px;letter-spacing:0.000px;">Apr 15</div>
<div class="t" style="left:434.61px;top:671.63px;font-size:10.3px;line-height:12px;color:#524E60;font-weight:400;-webkit-text-stroke:.15px;letter-spacing:0.000px;">Apr 17</div>
<div class="t" style="left:485.43px;top:671.63px;font-size:10.3px;line-height:12px;color:#524E60;font-weight:400;-webkit-text-stroke:.15px;letter-spacing:0.000px;">Apr 19</div>
<div class="t" style="left:536.25px;top:671.63px;font-size:10.3px;line-height:12px;color:#524E60;font-weight:400;-webkit-text-stroke:.15px;letter-spacing:0.000px;">Apr 21</div>
<div class="t" style="left:587.07px;top:671.63px;font-size:10.3px;line-height:12px;color:#524E60;font-weight:400;-webkit-text-stroke:.15px;letter-spacing:0.000px;">Apr 23</div>
<div class="t" style="left:637.89px;top:671.63px;font-size:10.3px;line-height:12px;color:#524E60;font-weight:400;-webkit-text-stroke:.15px;letter-spacing:0.000px;">Apr 25</div>
<div class="t" style="left:688.71px;top:671.63px;font-size:10.3px;line-height:12px;color:#524E60;font-weight:400;-webkit-text-stroke:.15px;letter-spacing:0.000px;">Apr 27</div>
<div class="t" style="left:739.53px;top:671.63px;font-size:10.3px;line-height:12px;color:#524E60;font-weight:400;-webkit-text-stroke:.15px;letter-spacing:0.000px;">Apr 29</div>
<div class="t" style="left:791.29px;top:671.63px;font-size:10.3px;line-height:12px;color:#524E60;font-weight:400;-webkit-text-stroke:.15px;letter-spacing:0.084px;">May 1</div>
<div class="t" style="left:842.11px;top:671.63px;font-size:10.3px;line-height:12px;color:#524E60;font-weight:400;-webkit-text-stroke:.15px;letter-spacing:0.084px;">May 3</div>
<div class="t" style="left:892.93px;top:671.63px;font-size:10.3px;line-height:12px;color:#524E60;font-weight:400;-webkit-text-stroke:.15px;letter-spacing:0.084px;">May 5</div>
<div class="t" style="left:943.75px;top:671.63px;font-size:10.3px;line-height:12px;color:#524E60;font-weight:400;-webkit-text-stroke:.15px;letter-spacing:0.084px;">May 7</div>
<svg class="i" style="left:203.60px;top:734.40px" width="11.8" height="7.4" viewBox="0 0 11.8 7.4"><rect x="0" y="0" width="5" height="7.4" rx=".6" fill="#201B30"/><rect x="6.6" y="0" width="5" height="7.4" rx=".6" fill="#201B30"/></svg>
<div class="t" style="left:221.70px;top:731.12px;font-size:10.63px;line-height:14px;color:#201B30;font-weight:400;letter-spacing:0.084px;">Toggle Columns</div>
<svg class="i" style="left:973.40px;top:725.60px" width="11.2" height="13" viewBox="0 0 11.2 13"><path d="M5.6 12.4V1.2M.9 5.8L5.6 1.1L10.3 5.8" fill="none" stroke="#fff" stroke-width="1.6" stroke-linecap="round" stroke-linejoin="round"/></svg>
</div>
</body></html>
